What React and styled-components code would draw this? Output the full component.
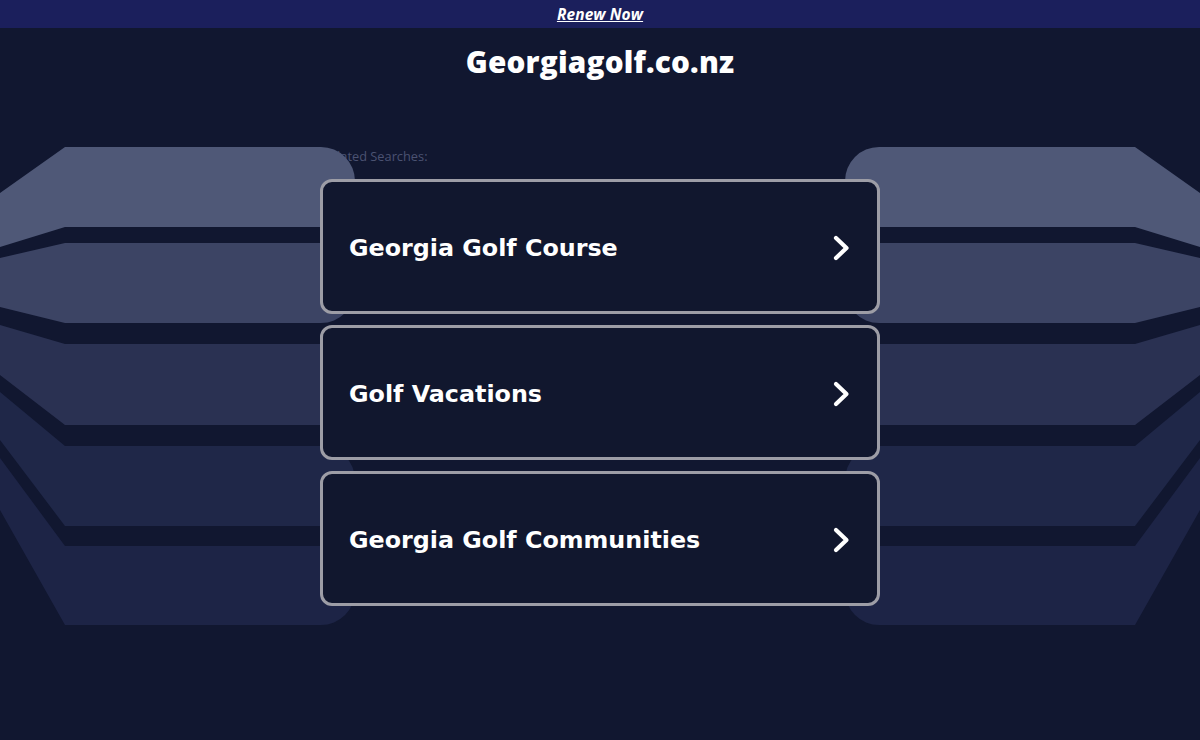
import React from "react";
import styled, { createGlobalStyle } from "styled-components";

const Global = createGlobalStyle`
  html, body { margin: 0; padding: 0; background: #111730; }
  body { font-family: "Open Sans", "Liberation Sans", sans-serif; }
  * { box-sizing: border-box; }
`;

const Page = styled.div`
  position: relative;
  width: 1200px;
  height: 740px;
  overflow: hidden;
  background: #111730;
  display: flex;
  flex-direction: column;
  align-items: center;
`;

const TopBar = styled.div`
  align-self: stretch;
  height: 28px;
  background: #1b1f5c;
  display: flex;
  align-items: center;
  justify-content: center;
  position: relative;
  z-index: 2;
  padding-bottom: 1px;
`;

const RenewLink = styled.a`
  color: #ffffff;
  font-family: "Open Sans", sans-serif;
  font-style: italic;
  font-weight: 700;
  font-size: 15.5px;
  text-decoration: underline;
  letter-spacing: 0.1px;
`;

const Title = styled.h1`
  margin: 15px 0 0;
  height: 38px;
  line-height: 38px;
  color: #ffffff;
  font-family: "Open Sans", sans-serif;
  font-weight: 800;
  font-size: 29.7px;
  letter-spacing: 0.2px;
  position: relative;
  z-index: 2;
`;

const Backdrop = styled.svg`
  position: absolute;
  left: 0;
  top: 0;
  z-index: 1;
  pointer-events: none;
`;

const Main = styled.div`
  width: 560px;
  margin-top: 67px;
  display: flex;
  flex-direction: column;
`;

const Label = styled.div`
  position: relative;
  z-index: 0;
  height: 17px;
  padding-left: 2px;
  font-family: "Open Sans", sans-serif;
  font-size: 12.8px;
  color: #4b5272;
  line-height: 17px;
  margin-bottom: 14px;
`;

const List = styled.div`
  display: flex;
  flex-direction: column;
  gap: 11px;
  position: relative;
  z-index: 2;
`;

const Card = styled.a`
  height: 135px;
  border: 3px solid #9d9da6;
  border-radius: 12px;
  background: #11172e;
  display: flex;
  align-items: center;
  justify-content: space-between;
  padding: 4px 26px 0 26px;
  text-decoration: none;
  cursor: pointer;
`;

const CardText = styled.span`
  color: #ffffff;
  font-family: "DejaVu Sans", Verdana, sans-serif;
  font-weight: 700;
  font-size: 23.8px;
  line-height: 1;
`;

const Chevron = () => (
  <svg width="20" height="28" viewBox="0 0 20 28" aria-hidden="true">
    <path
      d="M5 3 L15.5 13 L5 23"
      fill="none"
      stroke="#ffffff"
      strokeWidth="4.2"
      strokeLinecap="round"
      strokeLinejoin="round"
    />
  </svg>
);

const bands = [
  { tl: 193, t: 147, b: 227, bl: 247, c: "#4f5877" },
  { tl: 258, t: 243, b: 323, bl: 307, c: "#3c4464" },
  { tl: 325, t: 344, b: 425, bl: 375, c: "#2a3152" },
  { tl: 392, t: 446, b: 526, bl: 440, c: "#1f2748" },
  { tl: 458, t: 546, b: 625, bl: 510, c: "#1d2446" },
];

const R = 34;
const bandPath = ({ tl, t, b, bl }) =>
  `M0 ${tl} L65 ${t} L${355 - R} ${t} A${R} ${R} 0 0 1 355 ${t + R} L355 ${b - R} A${R} ${R} 0 0 1 ${355 - R} ${b} L65 ${b} L0 ${bl} Z`;

const Bands = () => (
  <Backdrop width="1200" height="740" viewBox="0 0 1200 740">
    <g>
      {bands.map((bd, i) => (
        <path key={i} d={bandPath(bd)} fill={bd.c} />
      ))}
    </g>
    <g transform="translate(1200 0) scale(-1 1)">
      {bands.map((bd, i) => (
        <path key={i} d={bandPath(bd)} fill={bd.c} />
      ))}
    </g>
  </Backdrop>
);

const items = ["Georgia Golf Course", "Golf Vacations", "Georgia Golf Communities"];

export default function App() {
  return (
    <>
      <Global />
      <Page>
        <Bands />
        <TopBar>
          <RenewLink>Renew Now</RenewLink>
        </TopBar>
        <Title>Georgiagolf.co.nz</Title>
        <Main>
          <Label>Related Searches:</Label>
          <List>
            {items.map((t) => (
              <Card key={t}>
                <CardText>{t}</CardText>
                <Chevron />
              </Card>
            ))}
          </List>
        </Main>
      </Page>
    </>
  );
}
